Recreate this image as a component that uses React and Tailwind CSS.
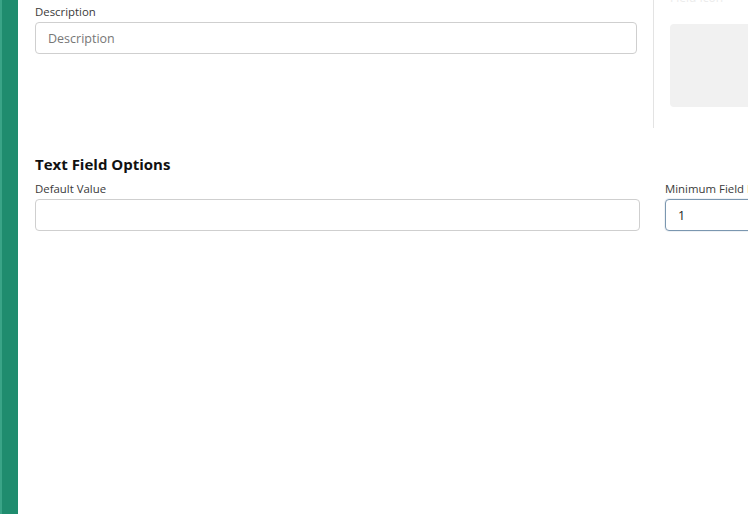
import React, { useState } from "react";

const font = { fontFamily: '"Open Sans", "Noto Sans", sans-serif' };

function Field({ label, value, onChange, placeholder, focused, className = "" }) {
    return (
        <div className={className}>
            <label className="block text-[11.4px] leading-[16px] text-[#3a3a3a] mb-[2px] whitespace-nowrap">{label}</label>
            <input
                value={value}
                onChange={(e) => onChange(e.target.value)}
                placeholder={placeholder}
                className={`w-full h-[32px] rounded-[4px] border px-[12px] text-[12.5px] text-[#222] placeholder-[#777] outline-none bg-white
                    ${focused ? "border-[#7b97b0] shadow-[0_0_0_1px_rgba(123,151,176,0.12)]" : "border-[#cfcfcf]"}`}
            />
        </div>
    );
}

export default function App() {
    const [description, setDescription] = useState("");
    const [defaultValue, setDefaultValue] = useState("");
    const [minLength, setMinLength] = useState("1");

    return (
        <div className="flex h-[514px] w-[748px] overflow-hidden bg-white" style={font}>
            {/* Accent rail */}
            <div className="w-[18px] shrink-0 flex">
                <div className="w-[2px] bg-[#3aa487]" />
                <div className="flex-1 bg-[#1f8c6e]" />
            </div>

            <div className="flex-1 pl-[17px] min-w-0">
                {/* General section */}
                <div className="flex h-[128px]">
                    <div className="w-[602px] shrink-0 pt-[4px]">
                        <Field
                            label="Description"
                            value={description}
                            onChange={setDescription}
                            placeholder="Description"
                        />
                    </div>
                    <div className="ml-[16px] w-px shrink-0 bg-[#e3e3e3]" />
                    <div className="ml-[16px] flex-1 min-w-0 relative">
                        <div className="absolute -top-[11px] left-0 text-[12px] text-[#ececec] whitespace-nowrap">Field Icon</div>
                        <div className="mt-[24px] h-[83px] w-[100px] rounded-[4px] bg-[#f1f1f1]" />
                    </div>
                </div>

                {/* Text field options */}
                <h2 className="mt-[26px] text-[15px] leading-[20px] font-bold text-[#111]">Text Field Options</h2>
                <div className="flex gap-[25px] mt-[7px]">
                    <Field
                        className="w-[605px] shrink-0"
                        label="Default Value"
                        value={defaultValue}
                        onChange={setDefaultValue}
                    />
                    <Field
                        className="w-[120px] shrink-0"
                        label="Minimum Field Length"
                        value={minLength}
                        onChange={setMinLength}
                        focused
                    />
                </div>
            </div>
        </div>
    );
}
